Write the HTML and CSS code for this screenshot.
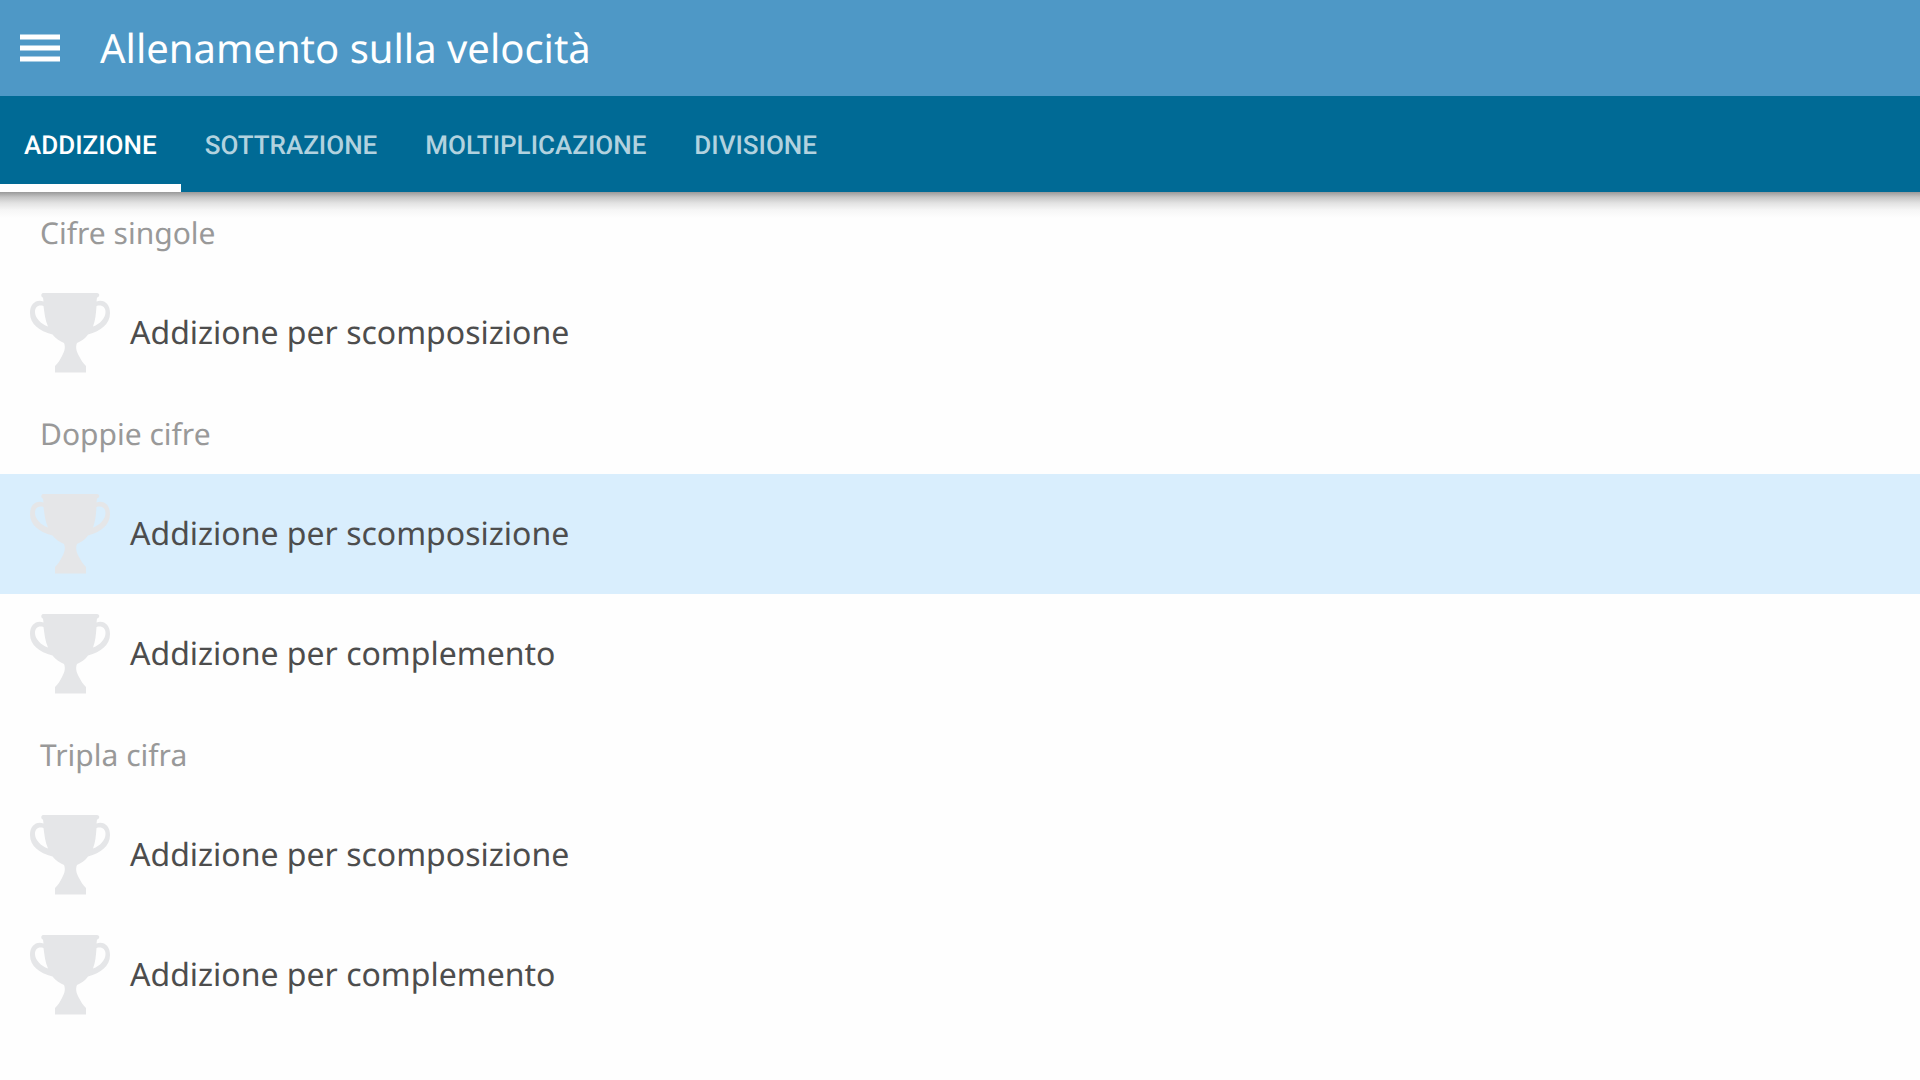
FILE: index.html
```html
<!DOCTYPE html>
<html lang="it">
<head>
  <meta charset="UTF-8">
  <meta name="viewport" content="width=device-width, initial-scale=1">
  <title>Allenamento sulla velocità</title>
  <link rel="stylesheet" href="styles.css">
</head>
<body>
  <svg class="sprite" aria-hidden="true">
    <symbol id="trophy" viewBox="0 0 80 80">
      <path fill-rule="evenodd" d="M13 0h54c3 0 3 4 0 4.500L66.500 8.500C74 6 80 11 80 20C80 31 71 38 58 41.500C55 46 51 48 47 50C45 55 47 59 49 63C51 67 53 70 56 73V79.500H25V73C28 70 30 67 32 63C34 59 36 55 34 50C30 48 26 46 22.500 41.500C9 38 0 31 0 20C0 11 6 6 13.500 8.500L13 4.500C10.500 4 11 0 13 0zM13.500 13C8 11.500 5 14 5 19C5 25 11 31 18 33.500C15 27 14.500 20 13.500 13zM66.500 13C72 11.500 75.500 14 75.500 19C75.500 25 70 31 63 33.500C65.500 27 66 20 66.500 13z"/>
    </symbol>
  </svg>

  <header class="toolbar">
    <button class="menu" type="button" aria-label="Menu">
      <svg width="40" height="28" viewBox="0 0 40 28"><path d="M0 0.500h40v5H0zM0 11.500h40v5H0zM0 22.500h40v5H0z"/></svg>
    </button>
    <h1>Allenamento sulla velocità</h1>
  </header>

  <nav class="tabs">
    <a class="tab active" href="#addizione">ADDIZIONE</a>
    <a class="tab" href="#sottrazione">SOTTRAZIONE</a>
    <a class="tab" href="#moltiplicazione">MOLTIPLICAZIONE</a>
    <a class="tab" href="#divisione">DIVISIONE</a>
  </nav>

  <main id="addizione">
    <h2>Cifre singole</h2>
    <a class="row" href="#"><svg class="trophy"><use href="#trophy"/></svg>Addizione per scomposizione</a>

    <h2>Doppie cifre</h2>
    <a class="row selected" href="#"><svg class="trophy"><use href="#trophy"/></svg>Addizione per scomposizione</a>
    <a class="row" href="#"><svg class="trophy"><use href="#trophy"/></svg>Addizione per complemento</a>

    <h2>Tripla cifra</h2>
    <a class="row" href="#"><svg class="trophy"><use href="#trophy"/></svg>Addizione per scomposizione</a>
    <a class="row" href="#"><svg class="trophy"><use href="#trophy"/></svg>Addizione per complemento</a>
  </main>
</body>
</html>
```
FILE: styles.css
```css
* {
  margin: 0;
  padding: 0;
  box-sizing: border-box;
}

body {
  background: #fefefe;
  color: #4d4d4d;
  font-family: "Noto Sans", sans-serif;
  text-rendering: geometricPrecision;
}

a {
  color: inherit;
  text-decoration: none;
}

.sprite {
  display: none;
}

.toolbar {
  display: flex;
  align-items: center;
  gap: 40px;
  height: 96px;
  padding: 0 20px;
  background: #4e98c6;
  color: #fff;
}

.toolbar h1 {
  padding-bottom: 2px;
  font-size: 40px;
  font-weight: 400;
}

.menu {
  display: flex;
  border: 0;
  background: none;
  cursor: pointer;
}

.menu svg {
  fill: #fff;
}

.tabs {
  display: flex;
  height: 96px;
  background: #006a95;
}

.tab {
  display: flex;
  align-items: center;
  padding: 12px 24px 0;
  border-bottom: 8px solid transparent;
  color: #b2d2df;
  font-family: Roboto, sans-serif;
  font-size: 26px;
  font-weight: 500;
}

.tab.active {
  border-color: #fff;
  color: #fff;
}

/* shadow under the tabs */
main {
  background: linear-gradient(#999, #c4c4c4 5px, #e2e2e2 11px, #f6f6f6 18px, #fefefe 26px);
}

h2 {
  padding: 0 40px;
  color: #999;
  font-size: 30px;
  font-weight: 400;
  line-height: 81px;
}

.row {
  display: flex;
  align-items: center;
  gap: 20px;
  height: 120px;
  padding: 0 30px;
  font-size: 32px;
  line-height: 44px;
}

.selected {
  background: #d9eefd;
}

.trophy {
  width: 80px;
  height: 80px;
  fill: #e5e6e8;
}
```
